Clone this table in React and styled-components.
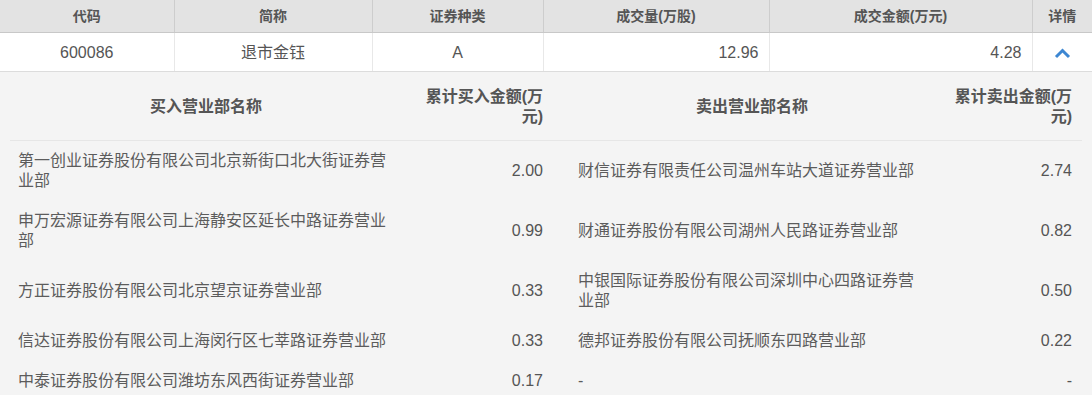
import styled, { createGlobalStyle } from 'styled-components';

const GlobalStyle = createGlobalStyle`
  body {
    margin: 0;
    background: #f4f4f4;
    font-family: "Liberation Sans", "Noto Sans CJK SC", sans-serif;
    color: #555;
  }
`;

const summaryCols = [174, 198, 171, 226, 263, 60];

const buys = [
  { name: '第一创业证券股份有限公司北京新街口北大街证券营业部', amount: '2.00' },
  { name: '申万宏源证券有限公司上海静安区延长中路证券营业部', amount: '0.99' },
  { name: '方正证券股份有限公司北京望京证券营业部', amount: '0.33' },
  { name: '信达证券股份有限公司上海闵行区七莘路证券营业部', amount: '0.33' },
  { name: '中泰证券股份有限公司潍坊东风西街证券营业部', amount: '0.17' },
];

const sells = [
  { name: '财信证券有限责任公司温州车站大道证券营业部', amount: '2.74' },
  { name: '财通证券股份有限公司湖州人民路证券营业部', amount: '0.82' },
  { name: '中银国际证券股份有限公司深圳中心四路证券营业部', amount: '0.50' },
  { name: '德邦证券股份有限公司抚顺东四路营业部', amount: '0.22' },
  { name: '-', amount: '-' },
];

const App = () => {
  return (
    <>
      <GlobalStyle />
      <Summary>
        <colgroup>
          {summaryCols.map((w, i) => <col key={i} style={{ width: w }} />)}
        </colgroup>
        <thead>
          <tr>
            <HeadCell>代码</HeadCell>
            <HeadCell>简称</HeadCell>
            <HeadCell>证券种类</HeadCell>
            <HeadCell>成交量(万股)</HeadCell>
            <HeadCell>成交金额(万元)</HeadCell>
            <HeadCell>详情</HeadCell>
          </tr>
        </thead>
        <tbody>
          <tr>
            <Cell>600086</Cell>
            <Cell>退市金钰</Cell>
            <Cell>A</Cell>
            <Cell $align='right'>12.96</Cell>
            <Cell $align='right'>4.28</Cell>
            <Cell>
              <Toggle width='17' height='12' viewBox='0 0 17 12'>
                <polyline points='2,10 8.5,3.5 15,10' />
              </Toggle>
            </Cell>
          </tr>
        </tbody>
      </Summary>

      <Detail>
        <Brokers>
          <colgroup>
            <col style={{ width: 392 }} />
            <col style={{ width: 151 }} />
            <col style={{ width: 381 }} />
            <col style={{ width: 148 }} />
          </colgroup>
          <thead>
            <tr>
              <BrokerHead>买入营业部名称</BrokerHead>
              <BrokerHead $amount>累计买入金额(万元)</BrokerHead>
              <BrokerHead $lead>卖出营业部名称</BrokerHead>
              <BrokerHead $amount>累计卖出金额(万元)</BrokerHead>
            </tr>
          </thead>
          <tbody>
            {buys.map((b, i) => (
              <tr key={i}>
                <NameCell>{b.name}</NameCell>
                <AmountCell>{b.amount}</AmountCell>
                <NameCell $lead>{sells[i].name}</NameCell>
                <AmountCell>{sells[i].amount}</AmountCell>
              </tr>
            ))}
          </tbody>
        </Brokers>
      </Detail>
    </>
  );
};

export default App;

const Summary = styled.table`
  width: 100%;
  border-collapse: collapse;
  table-layout: fixed;
  background: #fff;
`;

const HeadCell = styled.th`
  height: 32px;
  padding: 0;
  background: #e3e3e3;
  border-right: 1px solid #cdcdcd;
  border-bottom: 1px solid #c8c8c8;
  font-size: 14px;
  line-height: 18px;
  font-weight: bold;
  color: #555;
  text-align: center;
  &:last-child {
    border-right: none;
  }
`;

const Cell = styled.td`
  height: 36px;
  padding: 2px 10px 0;
  border-right: 1px solid #e8e8e8;
  border-bottom: 1px solid #dcdcdc;
  font-size: 16px;
  line-height: 20px;
  color: #555;
  text-align: ${p => p.$align || 'center'};
  vertical-align: middle;
  &:last-child {
    border-right: none;
  }
`;

const Toggle = styled.svg`
  display: block;
  margin: 0 auto;
  fill: none;
  stroke: #3d87d2;
  stroke-width: 3;
  stroke-linejoin: miter;
`;

const Detail = styled.div`
  background: #f4f4f4;
  padding: 0 10px;
`;

const Brokers = styled.table`
  width: 100%;
  border-collapse: collapse;
  table-layout: fixed;
`;

const BrokerHead = styled.th`
  padding: 15px ${p => (p.$amount ? '10px' : '8px')} 13px ${p => (p.$lead ? '25px' : '8px')};
  line-height: 20px;
  border-bottom: 1px solid #e6e6e6;
  font-size: 16px;
  font-weight: bold;
  color: #555;
  text-align: ${p => (p.$amount ? 'right' : 'center')};
  vertical-align: middle;
`;

const NameCell = styled.td`
  padding: 10px 8px 10px ${p => (p.$lead ? '25px' : '8px')};
  line-height: 20px;
  font-size: 16px;
  color: #5c5c5c;
  text-align: left;
  vertical-align: middle;
`;

const AmountCell = styled.td`
  padding: 10px 10px 10px 8px;
  line-height: 20px;
  font-size: 16px;
  color: #555;
  text-align: right;
  vertical-align: middle;
`;
